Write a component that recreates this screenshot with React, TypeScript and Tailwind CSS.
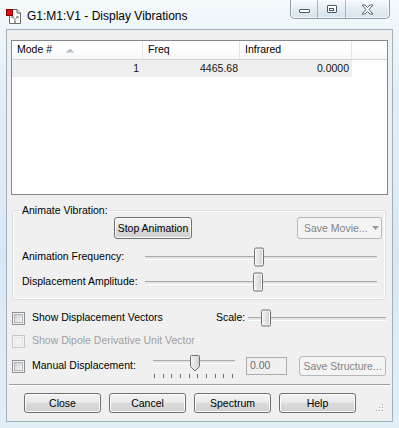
import type { ReactNode } from "react";
import clsx from "clsx";

interface WinButtonProps {
	children: ReactNode;
	className?: string;
	disabled?: boolean;
}

function WinButton(props: Readonly<WinButtonProps>) {
	const { children, className, disabled } = props;
	return (
		<div
			className={clsx(
				"flex items-center justify-center rounded-[3px] border leading-none",
				disabled
					? "border-[#b5b9bc] bg-[#f4f4f4] text-[#838383]"
					: "border-[#707070] bg-[linear-gradient(#f2f2f2,#ebebeb_45%,#dddddd_50%,#cfcfcf)] text-black shadow-[inset_0_0_0_1px_#fcfcfc]",
				className,
			)}
		>
			{children}
		</div>
	);
}

function Checkbox({ disabled }: { disabled?: boolean }) {
	return (
		<div
			className={clsx(
				"flex h-[13px] w-[13px] shrink-0 items-center justify-center border",
				disabled ? "border-[#c8c8c8] bg-[#f6f6f6]" : "border-[#8e8f8f] bg-[#f4f4f4]",
			)}
		>
			<div
				className={clsx(
					"h-[9px] w-[9px] border",
					disabled
						? "border-[#e4e4e4] bg-[#f2f2f2]"
						: "border-[#aeb3b9] bg-[linear-gradient(135deg,#cbcfd5,#f6f6f6)]",
				)}
			/>
		</div>
	);
}

function Thumb({ height = 19 }: { height?: number }) {
	return (
		<div
			className="absolute top-1/2 w-[10px] -translate-y-1/2 rounded-[2px] border border-[#707070] bg-[linear-gradient(90deg,#f3f3f3,#e2e2e2_50%,#d0d0d0)] shadow-[inset_0_0_0_1px_#fbfbfb]"
			style={{ height }}
		/>
	);
}

interface SliderProps {
	width: number;
	thumb: number;
	height?: number;
}

function Slider(props: Readonly<SliderProps>) {
	const { width, thumb, height = 19 } = props;
	return (
		<div className="relative h-[20px] shrink-0" style={{ width }}>
			<div className="absolute inset-x-0 top-[9px] h-[3px] border-t border-[#a9a9a9] bg-[#e6e6e6] shadow-[0_1px_0_#ffffff]" />
			<div className="absolute inset-y-0" style={{ left: thumb }}>
				<Thumb height={height} />
			</div>
		</div>
	);
}

function TickSlider() {
	return (
		<div className="relative h-[24px] w-[82px] shrink-0 self-start">
			<div className="absolute inset-x-0 top-[5px] h-[3px] border-t border-[#a9a9a9] bg-[#e6e6e6] shadow-[0_1px_0_#ffffff]" />
			<div className="absolute left-[1px] right-[2px] top-[19px] flex justify-between">
				{Array.from({ length: 10 }, (_, i) => (
					<div key={i} className="h-[4px] w-px bg-[#6a6a6a]" />
				))}
			</div>
			<svg className="absolute left-[37px] top-0" width="10" height="17" viewBox="0 0 10 17">
				<defs>
					<linearGradient id="tg" x1="0" x2="1" y1="0" y2="0">
						<stop offset="0" stopColor="#f4f4f4" />
						<stop offset="1" stopColor="#d2d2d2" />
					</linearGradient>
				</defs>
				<path d="M0.5 1.5 Q0.5 0.5 1.5 0.5 H8.5 Q9.5 0.5 9.5 1.5 V11.5 L5 16 L0.5 11.5 Z" fill="url(#tg)" stroke="#707070" />
			</svg>
		</div>
	);
}

function AppIcon() {
	return (
		<svg width="16" height="16" viewBox="0 0 16 16">
			<path d="M3.5 1.5 H11 L14.5 5 V15.5 H3.5 Z" fill="#ffffff" stroke="#6b6b6b" />
			<path d="M11 1.5 V5 H14.5" fill="#e9e9e9" stroke="#6b6b6b" />
			<g stroke="#8a8a8a" strokeWidth="1">
				<line x1="6.5" y1="9" x2="9" y2="11.5" />
				<line x1="9" y1="11.5" x2="11.5" y2="9" />
				<line x1="9" y1="11.5" x2="9" y2="14" />
			</g>
			<circle cx="6.5" cy="9" r="1.2" fill="#8a8a8a" />
			<circle cx="11.5" cy="9" r="1.2" fill="#8a8a8a" />
			<circle cx="9" cy="14" r="1.1" fill="#8a8a8a" />
			<rect x="0.5" y="1.5" width="6" height="6" fill="#e01010" stroke="#8a0000" />
		</svg>
	);
}

function CaptionButtons() {
	return (
		<div className="mr-[9px] flex h-[19px] self-start overflow-hidden rounded-b-[5px] border border-t-0 border-[#8c99a6] bg-[linear-gradient(#f6f9fc,#e4edf4_50%,#d6e2ec)] shadow-[inset_0_0_0_1px_#f8fbfd]">
			<div className="flex w-[27px] items-center justify-center border-r border-[#a8b4bf]">
				<div className="mt-[4px] h-[4px] w-[11px] rounded-[1px] border border-[#4f5a66] bg-white" />
			</div>
			<div className="flex w-[28px] items-center justify-center border-r border-[#a8b4bf]">
				<div className="flex h-[8px] w-[10px] items-center justify-center rounded-[1px] border border-[#4f5a66] bg-white">
					<div className="h-[3px] w-[5px] border border-[#4f5a66]" />
				</div>
			</div>
			<div className="flex w-[43px] items-center justify-center">
				<svg width="13" height="11" viewBox="0 0 13 11">
					<path
						d="M1 1 H4 L6.5 3.5 L9 1 H12 L8 5.5 L12 10 H9 L6.5 7.5 L4 10 H1 L5 5.5 Z"
						fill="#ffffff"
						stroke="#5b6570"
						strokeLinejoin="round"
					/>
				</svg>
			</div>
		</div>
	);
}

function SizeGrip() {
	const dots = [
		[6, 0],
		[6, 3],
		[3, 3],
		[6, 6],
		[3, 6],
		[0, 6],
	];
	return (
		<svg className="mb-px mr-[8px] ml-auto self-end" width="8" height="8" viewBox="0 0 8 8">
			{dots.map(([x, y]) => (
				<g key={`${x}-${y}`}>
					<rect x={x + 1} y={y + 1} width="1" height="1" fill="#ffffff" />
					<rect x={x} y={y} width="1" height="1" fill="#a0a0a0" />
				</g>
			))}
		</svg>
	);
}

function ModeList() {
	return (
		<div className="ml-[4px] mt-[10px] h-[155px] w-[377px] border border-[#828790] bg-white">
			<div className="flex h-[19px] border-b border-[#d5d5d5] bg-[linear-gradient(#ffffff,#ffffff_40%,#f6f7f8)]">
				<div className="flex w-[131px] items-center border-r border-[#e3e4e6] pl-[5px]">
					<span>Mode #</span>
					<svg className="ml-[13px]" width="10" height="5" viewBox="0 0 10 5">
						<path d="M0.5 4.5 L5 0.5 L9.5 4.5 Z" fill="#b8c0c8" />
					</svg>
				</div>
				<div className="flex w-[97px] items-center border-r border-[#e3e4e6] pl-[5px]">Freq</div>
				<div className="flex w-[112px] items-center border-r border-[#e3e4e6] pl-[5px]">Infrared</div>
				<div className="flex-1" />
			</div>
			<div className="flex h-[17px] w-[340px] items-center bg-[#efefef] text-[#141414]">
				<div className="w-[131px] pr-[4px] text-right">1</div>
				<div className="w-[97px] pr-[2px] text-right">4465.68</div>
				<div className="w-[112px] pr-[3px] text-right">0.0000</div>
			</div>
		</div>
	);
}

function AnimateGroup() {
	return (
		<div className="relative ml-[5px] mt-[15px] h-[90px] w-[374px] rounded-[3px] border border-[#d5dfe5] shadow-[inset_0_0_0_1px_#ffffff]">
			<div className="absolute left-[8px] top-[-7px] bg-[#f0f0f0] px-px leading-[12px]">Animate Vibration:</div>
			<div className="mt-[6px] flex">
				<WinButton className="ml-[101px] h-[22px] w-[78px]">Stop Animation</WinButton>
				<WinButton disabled className="ml-[105px] h-[22px] w-[85px] justify-start pl-[6px]">
					<span>Save Movie...</span>
					<svg className="ml-[4px]" width="7" height="4" viewBox="0 0 7 4">
						<path d="M0 0 H7 L3.5 4 Z" fill="#9a9a9a" />
					</svg>
				</WinButton>
			</div>
			<div className="mt-[8px] flex h-[20px] items-center pl-[9px]">
				<div className="w-[123px]">Animation Frequency:</div>
				<Slider width={232} thumb={109} />
			</div>
			<div className="mt-[5px] flex h-[20px] items-center pl-[9px]">
				<div className="w-[123px]">Displacement Amplitude:</div>
				<Slider width={232} thumb={108} />
			</div>
		</div>
	);
}

export default function App() {
	return (
		<div className="h-[428px] w-[399px] overflow-hidden bg-[linear-gradient(180deg,#f4f9fc,#e3eff7_20%,#d8e8f3_60%,#e2eff7)] font-['Liberation_Sans',Arial,sans-serif] text-[10.5px] text-black">
			<div className="flex h-[29px] items-center">
				<div className="ml-[6px] mt-[3px]">
					<AppIcon />
				</div>
				<div className="ml-[5px] mt-[3px] text-[12px] text-black">G1:M1:V1 - Display Vibrations</div>
				<div className="flex-1" />
				<CaptionButtons />
			</div>
			<div className="ml-[6px] flex h-[393px] w-[387px] flex-col border border-[#a3b0bc] bg-[#f0f0f0]">
				<ModeList />
				<AnimateGroup />

				<div className="ml-[5px] mt-[9px] flex h-[18px] items-center">
					<div className="flex w-[204px] items-center">
						<Checkbox />
						<span className="ml-[7px]">Show Displacement Vectors</span>
					</div>
					<div className="w-[32px]">Scale:</div>
					<Slider width={138} thumb={13} height={17} />
				</div>

				<div className="ml-[5px] mt-[5px] flex h-[18px] items-center text-[#a0a0a0]">
					<Checkbox disabled />
					<span className="ml-[7px]">Show Dipole Derivative Unit Vector</span>
				</div>

				<div className="ml-[5px] mt-[5px] flex h-[22px] items-center">
					<div className="flex w-[141px] items-center">
						<Checkbox />
						<span className="ml-[7px]">Manual Displacement:</span>
					</div>
					<TickSlider />
					<div className="ml-[11px] flex h-[18px] w-[41px] items-center border border-[#acacac] bg-[#f0f0f0] pl-[3px] text-[#6d6d6d]">
						0.00
					</div>
					<WinButton disabled className="ml-[12px] h-[20px] w-[87px]">
						Save Structure...
					</WinButton>
				</div>

				<div className="ml-[2px] mt-[7px] w-[381px] border-t border-b border-t-[#a0a0a0] border-b-white" />

				<div className="mt-[7px] flex h-[20px]">
					<WinButton className="ml-[17px] h-[20px] w-[77px]">Close</WinButton>
					<WinButton className="ml-[8px] h-[20px] w-[77px]">Cancel</WinButton>
					<WinButton className="ml-[8px] h-[20px] w-[77px]">Spectrum</WinButton>
					<WinButton className="ml-[8px] h-[20px] w-[77px]">Help</WinButton>
					<SizeGrip />
				</div>
			</div>
		</div>
	);
}
